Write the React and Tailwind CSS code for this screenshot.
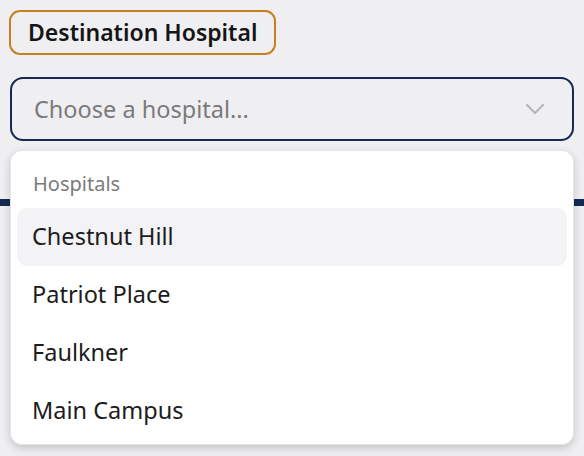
import React from "react";

const hospitals = ["Chestnut Hill", "Patriot Place", "Faulkner", "Main Campus"];

export default function App() {
  return (
    <div
      className="w-[584px] h-[456px] bg-[#efeff2] overflow-hidden"
      style={{ fontFamily: '"Noto Sans", "Open Sans", sans-serif' }}
    >
      <div className="px-[10px] pt-[10px]">
        {/* label */}
        <div className="inline-flex items-center h-[45px] px-[17px] border-2 border-[#c87f22] rounded-[11px] text-[23px] font-semibold text-[#151515] -ml-px">
          Destination Hospital
        </div>

        {/* select */}
        <div className="mt-[22px] h-[64px] flex items-center justify-between border-2 border-[#142a52] rounded-[13px] pl-[22px] pr-[28px]">
          <span className="text-[23.5px] text-[#7a7a7a] pt-[2px]">Choose a hospital...</span>
          <svg width="18" height="10" viewBox="0 0 18 10" fill="none">
            <path d="M1 1l8 8 8-8" stroke="#b5b5b8" strokeWidth="2" strokeLinecap="round" strokeLinejoin="round" />
          </svg>
        </div>
      </div>

      {/* page divider behind the dropdown */}
      <div className="relative mt-[58px] h-[7px] bg-[#142a52]" />

      {/* dropdown */}
      <div className="relative -mt-[56px] mx-[10px] bg-white rounded-[12px] shadow-[0_3px_8px_rgba(0,0,0,0.18)] border border-[#e6e6e8] px-[6px] pt-[6px] pb-[4px]">
        <div className="h-[51px] flex items-center pl-[16px] pt-[2px] text-[20px] text-[#7b7b7b]">
          Hospitals
        </div>
        {hospitals.map((h, i) => (
          <div
            key={h}
            className={
              i === 0
                ? "h-[58px] flex items-center pl-[15px] rounded-[10px] bg-[#f3f3f5] text-[23.5px] text-[#1c1c1c]"
                : "h-[58px] flex items-center pl-[15px] rounded-[10px] text-[23.5px] text-[#1c1c1c]"
            }
          >
            {h}
          </div>
        ))}
      </div>
    </div>
  );
}
